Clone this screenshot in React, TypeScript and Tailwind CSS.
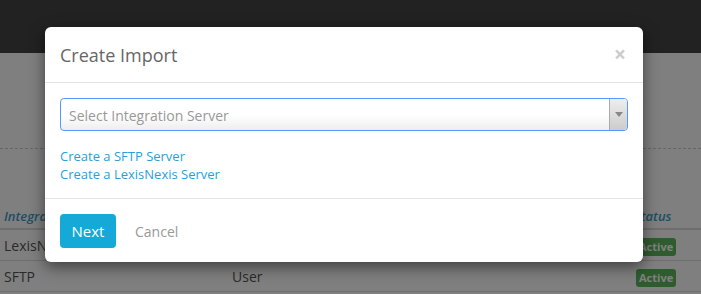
import React from "react";

const rows = [
  { name: "LexisNexis", type: "Admin" },
  { name: "SFTP", type: "User" },
];

function PageBehind() {
  return (
    <div className="flex h-full flex-col">
      <div className="h-[53px] bg-[#444]" />
      <div className="h-[95px]" />
      <div className="border-t border-dashed border-[#ccc]" />
      <div className="h-[57px]" />
      <div className="flex h-[24px] items-center border-b-2 border-[#ddd] text-[13px] italic font-semibold text-[#3a9ec9]">
        <div className="w-[228px] pl-[4px]">Integration Server</div>
        <div className="flex-1 pl-[4px]">Type</div>
        <div className="w-[67px]">Status</div>
      </div>
      {rows.map((r) => (
        <div
          key={r.name}
          className="flex h-[31px] items-center border-b border-[#ddd] text-[14px] text-[#555]"
        >
          <div className="w-[228px] pl-[4px]">{r.name}</div>
          <div className="flex-1 pl-[4px]">{r.type}</div>
          <div className="w-[65px]">
            <span className="inline-block rounded-[3px] bg-[#5cb85c] px-[3px] py-[1px] text-[11px] font-bold leading-[16px] text-white">
              Active
            </span>
          </div>
        </div>
      ))}
    </div>
  );
}

function SelectBox() {
  return (
    <div className="flex h-[33px] overflow-hidden rounded-[4px] border border-[#5897fb] bg-gradient-to-b from-white from-50% to-[#eee]">
      <div className="flex flex-1 items-center pl-[8px] pt-[1px] text-[14px] text-[#999]">
        Select Integration Server
      </div>
      <div className="flex w-[18px] items-center justify-center border-l border-[#aaa] bg-gradient-to-b from-[#eee] to-[#ccc]">
        <svg width="8" height="5" viewBox="0 0 8 5">
          <path d="M0 0 H8 L4 5 Z" fill="#888" />
        </svg>
      </div>
    </div>
  );
}

export default function App() {
  return (
    <div
      className="relative h-[294px] w-[701px] overflow-hidden bg-white"
      style={{ fontFamily: '"Open Sans", "Liberation Sans", sans-serif' }}
    >
      <PageBehind />
      <div className="absolute inset-0 bg-black/50" />

      <div className="absolute left-[45px] top-[27px] w-[598px] rounded-[6px] bg-white shadow-[0_5px_15px_rgba(0,0,0,0.5)]">
        <div className="flex h-[56px] items-center justify-between border-b border-[#e5e5e5] px-[15px]">
          <h4 className="text-[18px] leading-[20px] text-[#666]">Create Import</h4>
          <span className="mr-[2px] text-[21px] font-bold leading-none text-[#ccc]">×</span>
        </div>

        <div className="p-[15px]">
          <SelectBox />
          <div className="mt-[16px] flex flex-col text-[13px] leading-[18px] text-[#2a9fd6]">
            <a>Create a SFTP Server</a>
            <a>Create a LexisNexis Server</a>
          </div>
        </div>

        <div className="flex items-center gap-[19px] border-t border-[#e5e5e5] px-[15px] pb-[14px] pt-[15px]">
          <button className="h-[34px] w-[56px] rounded-[4px] bg-[#14a9d6] text-[15px] text-white">
            Next
          </button>
          <span className="text-[14px] text-[#999]">Cancel</span>
        </div>
      </div>
    </div>
  );
}
